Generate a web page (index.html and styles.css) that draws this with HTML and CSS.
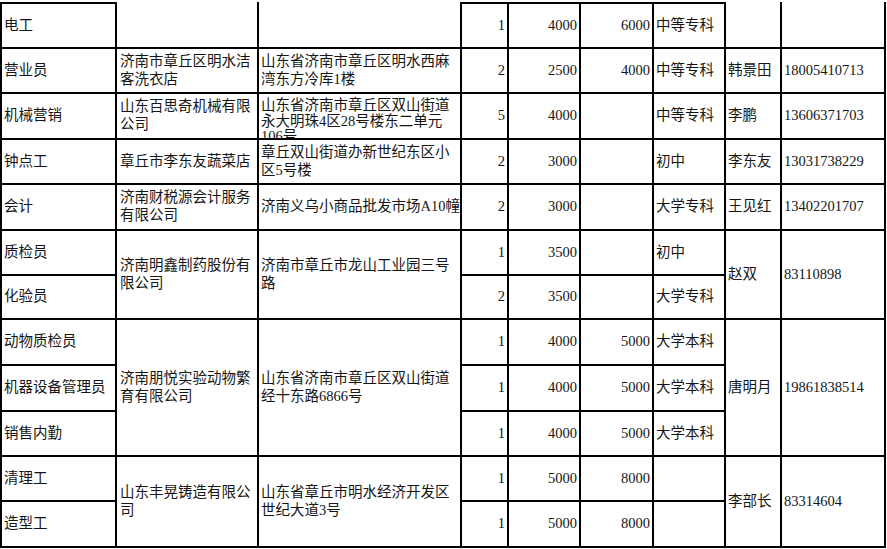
FILE: index.html
```html
<!DOCTYPE html>
<html lang="zh-CN">
<head>
<meta charset="utf-8">
<title>招聘信息</title>
<link rel="stylesheet" href="styles.css">
</head>
<body>
<div class="sheet">
  <!-- row 1 -->
  <div class="c top">电工</div>
  <div class="c"></div>
  <div class="c"></div>
  <div class="c num top">1</div>
  <div class="c num top">4000</div>
  <div class="c num top">6000</div>
  <div class="c top">中等专科</div>
  <div class="c"></div>
  <div class="c"></div>
  <!-- row 2 -->
  <div class="c">营业员</div>
  <div class="c co">济南市章丘区明水洁客洗衣店</div>
  <div class="c">山东省济南市章丘区明水西麻湾东方冷库1楼</div>
  <div class="c num">2</div>
  <div class="c num">2500</div>
  <div class="c num">4000</div>
  <div class="c">中等专科</div>
  <div class="c">韩景田</div>
  <div class="c">18005410713</div>
  <!-- row 3 -->
  <div class="c">机械营销</div>
  <div class="c co">山东百思奇机械有限公司</div>
  <div class="c clip"><span>山东省济南市章丘区双山街道永大明珠4区28号楼东二单元106号</span></div>
  <div class="c num">5</div>
  <div class="c num">4000</div>
  <div class="c num"></div>
  <div class="c">中等专科</div>
  <div class="c">李鹏</div>
  <div class="c">13606371703</div>
  <!-- row 4 -->
  <div class="c">钟点工</div>
  <div class="c co">章丘市李东友蔬菜店</div>
  <div class="c">章丘双山街道办新世纪东区小区5号楼</div>
  <div class="c num">2</div>
  <div class="c num">3000</div>
  <div class="c num"></div>
  <div class="c">初中</div>
  <div class="c">李东友</div>
  <div class="c">13031738229</div>
  <!-- row 5 -->
  <div class="c">会计</div>
  <div class="c co">济南财税源会计服务有限公司</div>
  <div class="c nowrap"><span>济南义乌小商品批发市场A10幢</span></div>
  <div class="c num">2</div>
  <div class="c num">3000</div>
  <div class="c num"></div>
  <div class="c">大学专科</div>
  <div class="c">王见红</div>
  <div class="c">13402201707</div>
  <!-- row 6-7 -->
  <div class="c">质检员</div>
  <div class="c co span2">济南明鑫制药股份有限公司</div>
  <div class="c span2">济南市章丘市龙山工业园三号路</div>
  <div class="c num">1</div>
  <div class="c num">3500</div>
  <div class="c num"></div>
  <div class="c">初中</div>
  <div class="c span2">赵双</div>
  <div class="c span2">83110898</div>
  <div class="c">化验员</div>
  <div class="c num">2</div>
  <div class="c num">3500</div>
  <div class="c num"></div>
  <div class="c">大学专科</div>
  <!-- rows 8-10 -->
  <div class="c">动物质检员</div>
  <div class="c co span3">济南朋悦实验动物繁育有限公司</div>
  <div class="c span3">山东省济南市章丘区双山街道经十东路6866号</div>
  <div class="c num">1</div>
  <div class="c num">4000</div>
  <div class="c num">5000</div>
  <div class="c">大学本科</div>
  <div class="c span3">唐明月</div>
  <div class="c span3">19861838514</div>
  <div class="c">机器设备管理员</div>
  <div class="c num">1</div>
  <div class="c num">4000</div>
  <div class="c num">5000</div>
  <div class="c">大学本科</div>
  <div class="c">销售内勤</div>
  <div class="c num">1</div>
  <div class="c num">4000</div>
  <div class="c num">5000</div>
  <div class="c">大学本科</div>
  <!-- rows 11-12 -->
  <div class="c">清理工</div>
  <div class="c co span2">山东丰晃铸造有限公司</div>
  <div class="c span2">山东省章丘市明水经济开发区世纪大道3号</div>
  <div class="c num">1</div>
  <div class="c num">5000</div>
  <div class="c num">8000</div>
  <div class="c"></div>
  <div class="c span2">李部长</div>
  <div class="c span2">83314604</div>
  <div class="c">造型工</div>
  <div class="c num">1</div>
  <div class="c num">5000</div>
  <div class="c num">8000</div>
  <div class="c"></div>
</div>
</body>
</html>
```

FILE: styles.css
```css
html, body {
  margin: 0;
  padding: 0;
  background: #ffffff;
}

body {
  font-family: "Liberation Serif", "Noto Sans CJK SC", serif;
  font-size: 14.5px;
  color: #151515;
}

.sheet {
  display: grid;
  grid-template-columns: 115px 142px 203px 47px 72px 73px 72px 56px 104px;
  grid-template-rows: 47px 45px 46px 45px 46px 45px 44px 46px 46px 45px 45px 46px;
  width: max-content;
  margin-top: 2px;
  border-left: 2px solid #000;
}

.c {
  box-sizing: border-box;
  display: flex;
  align-items: center;
  min-width: 0;
  overflow: hidden;
  padding: 0 2px 0 2px;
  border-right: 2px solid #000;
  border-bottom: 2px solid #000;
  line-height: 17.8px;
}

.top {
  border-top: 2px solid #000;
}

.num {
  justify-content: flex-end;
  padding-right: 2px;
}

.co {
  padding-left: 3px;
}

.span2 {
  grid-row: span 2;
}

.span3 {
  grid-row: span 3;
}

.clip {
  align-items: flex-start;
  padding-top: 4px;
  line-height: 15.5px;
}

.nowrap {
  white-space: nowrap;
}
```
